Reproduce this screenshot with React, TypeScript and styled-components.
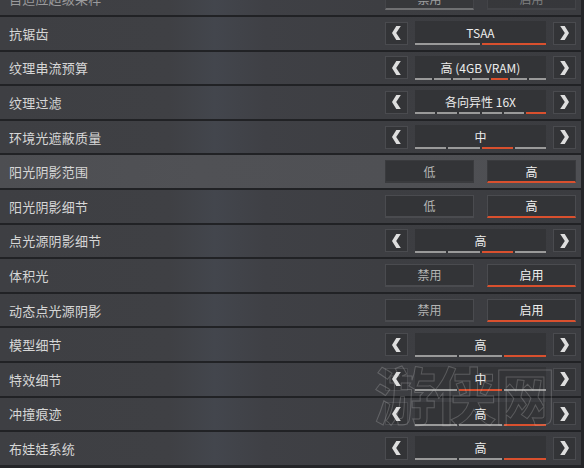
import React from 'react';
import styled, { createGlobalStyle } from 'styled-components';

const GlobalStyle = createGlobalStyle`
  html, body {
    margin: 0;
    padding: 0;
    background: #2a2b2e;
  }
  body {
    font-family: "Noto Sans CJK SC", "Noto Sans", "Liberation Sans", sans-serif;
  }
`;

const Screen = styled.div`
  position: relative;
  width: 584px;
  height: 468px;
  overflow: hidden;
  background: #242528;
`;

const List = styled.div`
  display: flex;
  flex-direction: column;
  width: 581px;
  margin-top: -19.6px;
`;

const Row = styled.div<{ $active?: boolean }>`
  box-sizing: border-box;
  height: 34.6px;
  display: flex;
  align-items: center;
  justify-content: space-between;
  padding: 0 5px 0 9px;
  border-top: 2px solid #212225;
  background: ${(p) =>
    p.$active
      ? 'linear-gradient(90deg, #4d4e52 0, #505155 200px, #4e4f53 100%)'
      : 'linear-gradient(90deg, #3e3f43 0, #3f4044 170px, #43464d 215px, #3f4045 265px, #3d3e42 380px, #3b3c40 100%)'};
`;

const Label = styled.span<{ $dim?: boolean }>`
  font-size: 13px;
  line-height: 1;
  color: ${(p) => (p.$dim ? '#9a9a9c' : '#d6d6d6')};
  letter-spacing: 0.2px;
`;

const Stepper = styled.div`
  display: flex;
  align-items: center;
  gap: 7px;
  width: 191px;
`;

const ArrowButton = styled.div`
  box-sizing: border-box;
  width: 23px;
  height: 23px;
  display: flex;
  align-items: center;
  justify-content: center;
  background: #333437;
  border: 1px solid #4a4b4f;
`;

const ValueBox = styled.div`
  flex: 1;
  height: 24px;
  display: flex;
  flex-direction: column;
  background: #333437;
`;

const ValueText = styled.div`
  flex: 1;
  display: flex;
  align-items: center;
  justify-content: center;
  font-size: 12px;
  color: #ececec;
  padding-top: 1px;
`;

const Segments = styled.div`
  display: flex;
  gap: 2px;
  height: 2px;
`;

const Segment = styled.div<{ $on: boolean }>`
  flex: 1;
  background: ${(p) => (p.$on ? '#d9502e' : '#9a9a9a')};
`;

const Toggle = styled.div<{ $dim?: boolean }>`
  display: grid;
  grid-template-columns: 1fr 1fr;
  gap: 13px;
  width: 191px;
  opacity: ${(p) => (p.$dim ? 0.55 : 1)};
`;

const ToggleOption = styled.div<{ $on: boolean; $active?: boolean; $mark?: string }>`
  box-sizing: border-box;
  height: 23px;
  display: flex;
  align-items: center;
  justify-content: center;
  font-size: 12px;
  color: ${(p) => (p.$on ? '#f0f0f0' : '#b4b4b4')};
  background: #333437;
  border: 1px solid ${(p) => (p.$active ? '#3a3b3e' : '#4a4b4f')};
  border-bottom: 2px solid ${(p) => p.$mark ?? (p.$active ? '#3a3b3e' : '#4a4b4f')};
`;

const Watermark = styled.div`
  position: absolute;
  left: 374px;
  top: 348px;
  font-size: 62px;
  font-weight: 700;
  letter-spacing: -2px;
  color: transparent;
  -webkit-text-stroke: 1px rgba(205, 205, 205, 0.26);
  pointer-events: none;
`;

const Chevron = ({ dir }: { dir: 'left' | 'right' }) => (
  <svg width="9" height="14" viewBox="0 0 9 14">
    <polygon
      fill="#dedede"
      points={dir === 'left' ? '8.8,0 4.2,7 8.8,14 4.3,14 0,7 4.3,0' : '0.2,0 4.8,7 0.2,14 4.7,14 9,7 4.7,0'}
    />
  </svg>
);

type Setting =
  | { label: string; kind: 'stepper'; value: string; count: number; index: number; active?: boolean }
  | { label: string; kind: 'toggle'; options: [string, string]; index: number; active?: boolean; dim?: boolean };

const settings: Setting[] = [
  { label: '自适应超级采样', kind: 'toggle', options: ['禁用', '启用'], index: 0, dim: true },
  { label: '抗锯齿', kind: 'stepper', value: 'TSAA', count: 2, index: 1 },
  { label: '纹理串流预算', kind: 'stepper', value: '高 (4GB VRAM)', count: 7, index: 4 },
  { label: '纹理过滤', kind: 'stepper', value: '各向异性 16X', count: 6, index: 5 },
  { label: '环境光遮蔽质量', kind: 'stepper', value: '中', count: 4, index: 2 },
  { label: '阳光阴影范围', kind: 'toggle', options: ['低', '高'], index: 1, active: true },
  { label: '阳光阴影细节', kind: 'toggle', options: ['低', '高'], index: 1 },
  { label: '点光源阴影细节', kind: 'stepper', value: '高', count: 4, index: 2 },
  { label: '体积光', kind: 'toggle', options: ['禁用', '启用'], index: 1 },
  { label: '动态点光源阴影', kind: 'toggle', options: ['禁用', '启用'], index: 1 },
  { label: '模型细节', kind: 'stepper', value: '高', count: 3, index: 2 },
  { label: '特效细节', kind: 'stepper', value: '中', count: 3, index: 1 },
  { label: '冲撞痕迹', kind: 'stepper', value: '高', count: 3, index: 2 },
  { label: '布娃娃系统', kind: 'stepper', value: '高', count: 3, index: 2 },
];

const SettingRow = ({ s }: { s: Setting }) => (
  <Row $active={s.active}>
    <Label $dim={s.kind === 'toggle' && s.dim}>{s.label}</Label>
    {s.kind === 'stepper' ? (
      <Stepper>
        <ArrowButton>
          <Chevron dir="left" />
        </ArrowButton>
        <ValueBox>
          <ValueText>{s.value}</ValueText>
          <Segments>
            {Array.from({ length: s.count }, (_, i) => (
              <Segment key={i} $on={i === s.index} />
            ))}
          </Segments>
        </ValueBox>
        <ArrowButton>
          <Chevron dir="right" />
        </ArrowButton>
      </Stepper>
    ) : (
      <Toggle $dim={s.dim}>
        {s.options.map((o, i) => (
          <ToggleOption
            key={o}
            $on={i === s.index}
            $active={s.active}
            $mark={i === s.index ? (s.dim ? '#9a9a9a' : '#d9502e') : undefined}
          >
            {o}
          </ToggleOption>
        ))}
      </Toggle>
    )}
  </Row>
);

export default function App() {
  return (
    <Screen>
      <GlobalStyle />
      <List>
        {settings.map((s) => (
          <SettingRow key={s.label} s={s} />
        ))}
      </List>
      <Watermark>游侠网</Watermark>
    </Screen>
  );
}
